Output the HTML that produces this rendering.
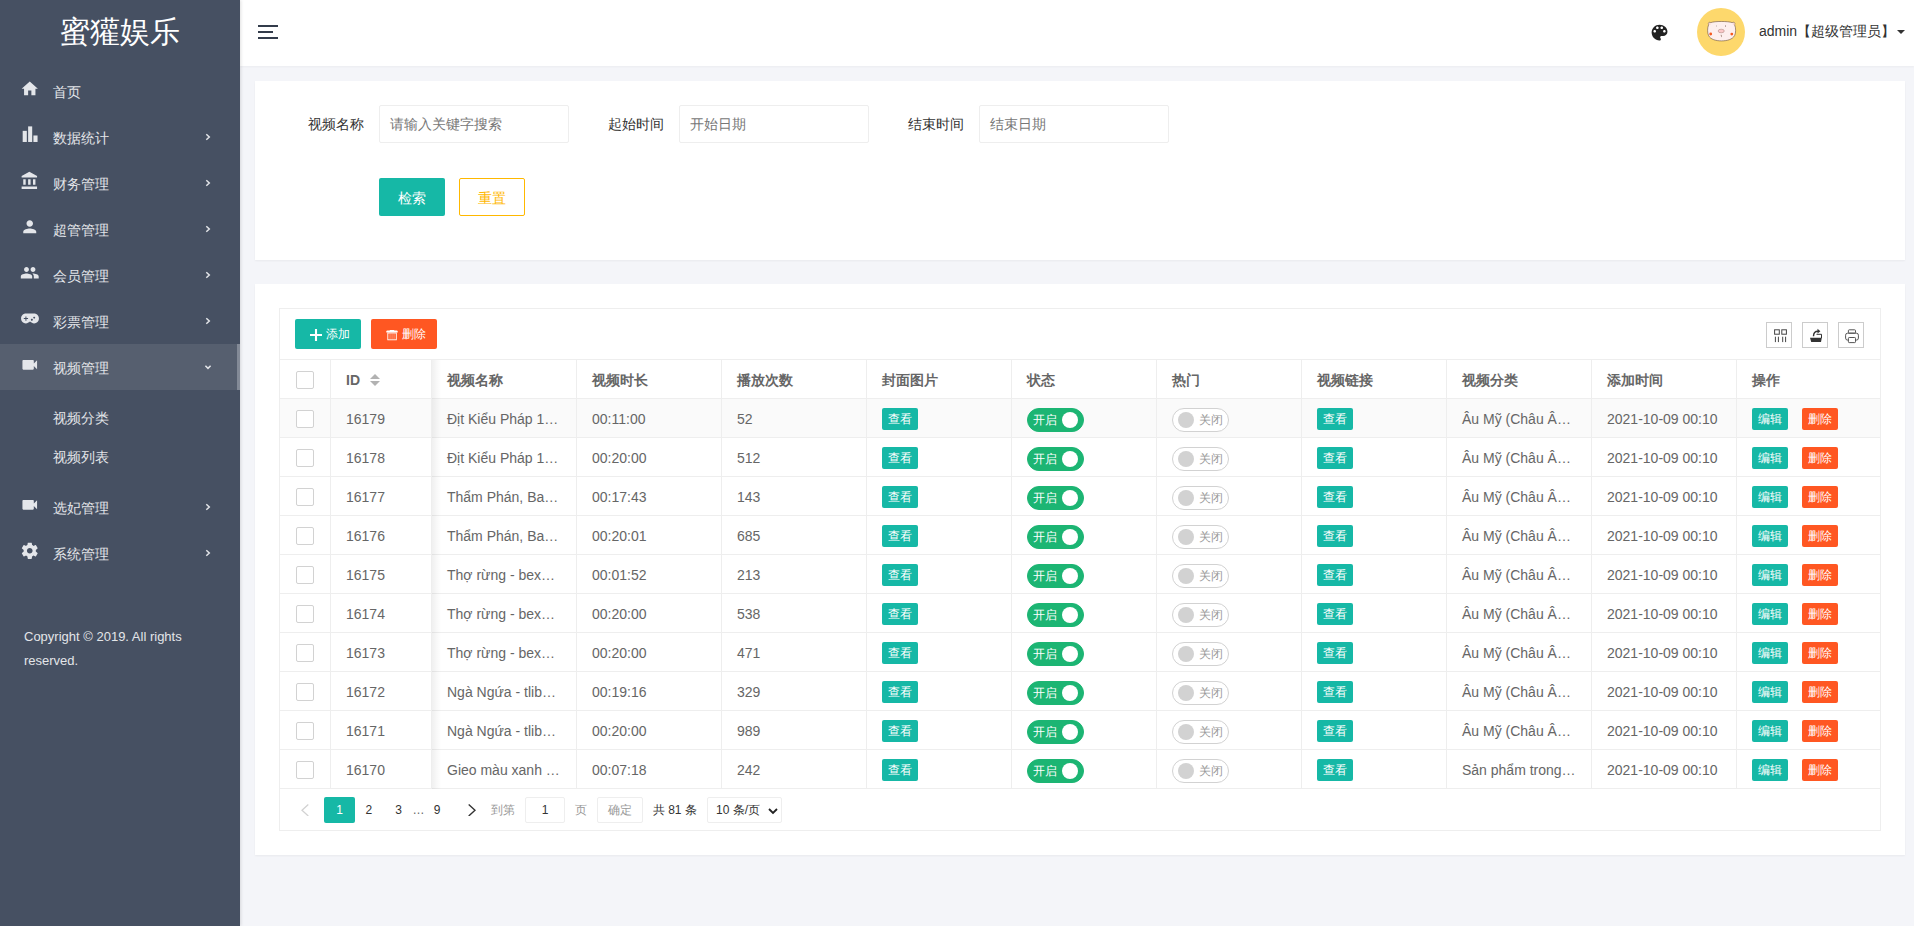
<!DOCTYPE html>
<html lang="zh">
<head>
<meta charset="utf-8">
<title>视频列表</title>
<style>
*{box-sizing:border-box;margin:0;padding:0}
html,body{width:1914px;height:926px;overflow:hidden}
body{font-family:"Liberation Sans",sans-serif;font-size:14px;color:#666;background:#f4f5f9;position:relative}
ul{list-style:none}
/* sidebar */
#side{position:absolute;left:0;top:0;width:240px;height:926px;background:#465062;color:#e3e5e9;z-index:5;box-shadow:1px 0 3px rgba(0,0,0,.12)}
#logo{position:absolute;left:0;top:0;width:240px;height:65px;line-height:64px;text-align:center;font-size:30px;color:#fff}
#nav{position:absolute;left:0;top:68px;width:240px}
#nav li.it{position:relative;height:46px;line-height:48px;padding-left:53px;font-size:14px;color:#e3e5e9}
#nav li.it svg.ic{position:absolute;left:20.200px;top:10.600px;width:19.500px;height:19.500px;fill:#e4e6ea}
#nav li.it svg.ar{position:absolute;left:204px;top:18.500px;width:8px;height:8px;fill:none;stroke:#e3e5e9;stroke-width:1.500}
#nav li.act{background:#565f6f}
#nav li.act:after{content:"";position:absolute;right:0;top:0;width:3px;height:46px;background:#838a97}
#nav ul.sub{padding:8px 0}
#nav ul.sub li{height:39px;line-height:40px;padding-left:53px;color:#e3e5e9}
#copy{position:absolute;left:24px;top:625px;width:192px;font-size:13px;line-height:24px;color:#e3e5e9}
/* header */
#head{position:absolute;left:240px;top:0;width:1674px;height:66px;background:#fff;box-shadow:0 1px 2px rgba(0,0,0,.04)}
#burger{position:absolute;left:18px;top:25px;width:20px;height:14px}
#burger i{position:absolute;left:0;height:2px;background:#333c4b;width:20px}
#pal{position:absolute;left:1409px;top:21.500px;width:21.100px;height:21.100px;fill:#222}
#ava{position:absolute;left:1457px;top:8px;width:48px;height:48px}
#uname{position:absolute;left:1519px;top:0;height:62px;line-height:62px;font-size:14px;color:#333;white-space:nowrap}
#caret{position:absolute;left:1657px;top:30px;width:0;height:0;border-left:4px solid transparent;border-right:4px solid transparent;border-top:4px solid #333}
/* cards */
.card{position:absolute;left:255px;width:1650px;background:#fff;box-shadow:0 1px 2px rgba(0,0,0,.05)}
#c1{top:81px;height:179px}
#c2{top:284px;height:571px}
.lbl{position:absolute;top:24px;height:38px;line-height:38px;width:110px;padding-right:15px;text-align:right;color:#333;font-size:14px}
.inp{position:absolute;top:24px;width:190px;height:38px;border:1px solid #eee;border-radius:2px;background:#fff;line-height:36px;padding-left:10px;color:#777;font-size:14px}
.btn{position:absolute;height:38px;line-height:40px;text-align:center;border-radius:2px;font-size:14px;color:#fff}

#tb{position:absolute;left:279px;top:308px;width:1602px;height:523px;border:1px solid #eee;background:#fff;overflow:hidden}
#tb .tool{position:absolute;left:0;top:0;width:1600px;height:51px;border-bottom:1px solid #eee}
.sbtn{position:absolute;top:10px;height:30px;width:66px;border-radius:2px;color:#fff;font-size:12px;line-height:31px;white-space:nowrap}
.tico{position:absolute;top:13px;width:26px;height:26px;border:1px solid #ccc;background:#fff}
.tico svg{position:absolute;left:0;top:0;width:24px;height:24px}
.row{position:absolute;left:0;width:1600px;height:39px;border-bottom:1px solid #eee}
.row.hd{font-weight:bold;color:#666}
.row.hv{background:#fafafa}
.c{position:absolute;top:0;height:38px;border-right:1px solid #eee;padding-left:15px;line-height:40px;font-size:14px;white-space:nowrap;overflow:hidden}
.c.last{border-right:none}
.cb{position:absolute;left:16px;top:11px;width:18px;height:18px;border:1px solid #d2d2d2;border-radius:2px;background:#fff}
.xs{position:absolute;top:9px;height:22px;width:36px;border-radius:2px;color:#fff;font-size:12px;line-height:23px;text-align:center;background:#16b8a6}
.xs.del{background:#ff5722}
.sw{position:absolute;left:15px;top:9px;width:57px;height:24px;border-radius:12px;font-size:12px;line-height:22px;border:1px solid #d2d2d2;background:#fff;color:#999}
.sw i{position:absolute;top:3px;width:16px;height:16px;border-radius:50%;background:#d2d2d2;left:5px}
.sw em{position:absolute;font-style:normal;left:26px;top:0}
.sw.on{background:#1cb573;border-color:#1cb573;color:#fff}
.sw.on i{background:#fff;left:34px}
.sw.on em{left:5px}
.sort{position:absolute;left:39px;top:14px;width:10px;height:12px}
.sort:before{content:"";position:absolute;left:0;top:-5px;border:5px solid transparent;border-bottom-color:#b2b2b2}
.sort:after{content:"";position:absolute;left:0;top:7px;border:5px solid transparent;border-top-color:#b2b2b2}
#shadow{position:absolute;left:152px;top:51px;width:9px;height:429px;background:linear-gradient(to right,rgba(0,0,0,.06),rgba(0,0,0,0))}
#pg{position:absolute;left:0;top:480px;width:1600px;height:41px;font-size:12px;color:#333}
#pg span,#pg div{position:absolute;top:8px;height:26px;line-height:26px;white-space:nowrap}

</style>
</head>
<body>
<div id="side">
  <div id="logo">蜜獾娱乐</div>
  <ul id="nav">
<li class="it"><svg class="ic" viewBox="0 0 24 24"><path d="M10 20v-6h4v6h5v-8h3L12 3 2 12h3v8z"/></svg><span>首页</span></li>
<li class="it"><svg class="ic" viewBox="0 0 24 24"><rect x="3.300" y="7.200" width="5.100" height="13.700"/><rect x="10" y="1.700" width="5" height="19.200"/><rect x="16.500" y="12.900" width="5.100" height="8"/></svg><span>数据统计</span><svg class="ar" viewBox="0 0 8 8"><path d="M2.300 1.200L5.300 4 2.300 6.800"/></svg></li>
<li class="it"><svg class="ic" viewBox="0 0 24 24"><path d="M4 10v7h3v-7H4zm6 0v7h3v-7h-3zM2 22h19v-3H2v3zm14-12v7h3v-7h-3zm-4.500-9L2 6v2h19V6l-9.500-5z"/></svg><span>财务管理</span><svg class="ar" viewBox="0 0 8 8"><path d="M2.300 1.200L5.300 4 2.300 6.800"/></svg></li>
<li class="it"><svg class="ic" viewBox="0 0 24 24"><path d="M12 12c2.210 0 4-1.790 4-4s-1.790-4-4-4-4 1.790-4 4 1.790 4 4 4zm0 2c-2.670 0-8 1.340-8 4v2h16v-2c0-2.660-5.330-4-8-4z"/></svg><span>超管管理</span><svg class="ar" viewBox="0 0 8 8"><path d="M2.300 1.200L5.300 4 2.300 6.800"/></svg></li>
<li class="it"><svg class="ic" viewBox="0 0 24 24"><path d="M16 11c1.660 0 2.990-1.340 2.990-3S17.660 5 16 5c-1.660 0-3 1.340-3 3s1.340 3 3 3zm-8 0c1.660 0 2.990-1.340 2.990-3S9.660 5 8 5C6.340 5 5 6.340 5 8s1.340 3 3 3zm0 2c-2.330 0-7 1.170-7 3.500V19h14v-2.500c0-2.330-4.670-3.500-7-3.500zm8 0c-.290 0-.620.020-.970.050 1.160.840 1.970 1.970 1.970 3.450V19h6v-2.500c0-2.330-4.670-3.500-7-3.500z"/></svg><span>会员管理</span><svg class="ar" viewBox="0 0 8 8"><path d="M2.300 1.200L5.300 4 2.300 6.800"/></svg></li>
<li class="it"><svg class="ic" viewBox="0 0 24 24"><g transform="translate(12.300 11.600) scale(.955) translate(-12.300 -11.600)"><path d="M7 5.200h10.600c3.500 0 6.200 2.900 6.200 6.400s-2.700 6.400-6.200 6.400c-2 0-3.700-.900-4.800-2.300l-.500 1.300-.500-1.300C10.700 17.100 9 18 7 18 3.500 18 .800 15.100.800 11.600S3.500 5.200 7 5.200z"/><path d="M4.300 11.100h2.100V9h1.300v2.100h2.100v1.300H7.700v2.100H6.400v-2.100H4.300zM14.700 12.100a1.200 1.200 0 1 0 .010 0zM17.700 9.300a1.200 1.200 0 1 0 .010 0z" fill="#465062"/></g></svg><span>彩票管理</span><svg class="ar" viewBox="0 0 8 8"><path d="M2.300 1.200L5.300 4 2.300 6.800"/></svg></li>
<li class="it act"><svg class="ic" viewBox="0 0 24 24"><path d="M17 10.500V7c0-.550-.450-1-1-1H4c-.550 0-1 .450-1 1v10c0 .550.450 1 1 1h12c.550 0 1-.450 1-1v-3.500l4 4v-11l-4 4z"/></svg><span>视频管理</span><svg class="ar" viewBox="0 0 8 8"><path d="M1.400 2.800L4 5.400 6.600 2.800"/></svg></li>
<li><ul class="sub"><li>视频分类</li><li>视频列表</li></ul></li>
<li class="it"><svg class="ic" viewBox="0 0 24 24"><path d="M17 10.500V7c0-.550-.450-1-1-1H4c-.550 0-1 .450-1 1v10c0 .550.450 1 1 1h12c.550 0 1-.450 1-1v-3.500l4 4v-11l-4 4z"/></svg><span>选妃管理</span><svg class="ar" viewBox="0 0 8 8"><path d="M2.300 1.200L5.300 4 2.300 6.800"/></svg></li>
<li class="it"><svg class="ic" viewBox="0 0 24 24"><path d="M19.430 12.980c.040-.320.070-.640.070-.980s-.030-.660-.070-.980l2.110-1.650c.190-.150.240-.420.120-.640l-2-3.460c-.120-.220-.390-.300-.610-.220l-2.490 1c-.520-.400-1.080-.730-1.690-.980l-.380-2.650C14.460 2.180 14.250 2 14 2h-4c-.250 0-.460.180-.490.420l-.380 2.650c-.610.250-1.170.590-1.690.980l-2.490-1c-.230-.090-.490 0-.610.220l-2 3.460c-.130.220-.070.490.120.640l2.110 1.650c-.040.320-.070.650-.070.980s.030.660.070.980l-2.110 1.650c-.190.150-.240.420-.120.640l2 3.460c.120.220.390.300.610.220l2.490-1c.520.400 1.080.730 1.690.980l.380 2.650c.030.240.240.420.490.420h4c.250 0 .460-.180.490-.420l.380-2.650c.610-.250 1.170-.590 1.690-.980l2.490 1c.230.090.490 0 .610-.220l2-3.460c.120-.220.070-.490-.120-.640l-2.110-1.650zM12 15.500c-1.930 0-3.500-1.570-3.500-3.500s1.570-3.500 3.500-3.500 3.500 1.570 3.500 3.500-1.570 3.500-3.500 3.500z"/></svg><span>系统管理</span><svg class="ar" viewBox="0 0 8 8"><path d="M2.300 1.200L5.300 4 2.300 6.800"/></svg></li>
  </ul>
  <div id="copy">Copyright © 2019. All rights reserved.</div>
</div>
<div id="head">
  <div id="burger"><i style="top:0"></i><i style="top:6px;width:15px"></i><i style="top:12px"></i></div>
  <svg id="pal" viewBox="0 0 24 24"><path d="M12 3c-4.970 0-9 4.030-9 9s4.030 9 9 9c.830 0 1.500-.670 1.500-1.500 0-.390-.150-.740-.390-1.010-.230-.260-.380-.610-.380-.990 0-.830.670-1.500 1.500-1.500H16c2.760 0 5-2.240 5-5 0-4.420-4.030-8-9-8zm-5.500 9c-.830 0-1.500-.670-1.500-1.500S5.670 9 6.500 9 8 9.670 8 10.500 7.330 12 6.500 12zm3-4C8.670 8 8 7.330 8 6.500S8.670 5 9.500 5s1.500.670 1.500 1.500S10.330 8 9.500 8zm5 0c-.830 0-1.500-.670-1.500-1.500S13.670 5 14.500 5s1.500.670 1.500 1.500S15.330 8 14.500 8zm3 4c-.830 0-1.500-.670-1.500-1.500S16.670 9 17.500 9s1.500.670 1.500 1.500-.670 1.500-1.500 1.500z"/></svg>
  <svg id="ava" viewBox="0 0 48 48"><circle cx="24" cy="24" r="24" fill="#fdd86c"/>
    <path d="M13.500 14.600C17 13.100 31.500 13.100 35.500 14.600C37.500 13.600 39 15 38.100 16.900C39.600 20 39.400 25 38.100 27.500C36 31.500 30 32.900 24.500 32.900C19 32.900 13 31.500 11.100 27.500C9.800 25 9.700 20 11.100 16.900C10.200 15 11.700 13.600 13.500 14.600Z" fill="#fdefee" stroke="#5a4034" stroke-width=".55" transform="translate(24.600 0) scale(.965 1) translate(-24.600 0)"/>
    <circle cx="12.600" cy="15.900" r="1" fill="#fbd3cf"/><circle cx="36.600" cy="15.900" r="1" fill="#fbd3cf"/>
    <ellipse cx="24.200" cy="23" rx="3.100" ry="1.800" fill="#fbc8c8" stroke="#7a5a4a" stroke-width=".35"/><circle cx="13.700" cy="26" r="1.400" fill="#f5591f"/><circle cx="34.800" cy="26.100" r="1.400" fill="#f5591f"/>
    <rect x="19.200" y="17.300" width=".45" height="1.400" fill="#9a8a84"/><rect x="28.300" y="17.300" width=".5" height="1.500" fill="#5a4034"/><path d="M23.600 27.200h.9v1.900" fill="none" stroke="#7a5a4a" stroke-width=".5"/></svg>
  <div id="uname">admin【超级管理员】</div>
  <div id="caret"></div>

</div>
<div class="card" id="c1">
  <div class="lbl" style="left:14px">视频名称</div><div class="inp" style="left:124px">请输入关键字搜索</div>
  <div class="lbl" style="left:314px">起始时间</div><div class="inp" style="left:424px">开始日期</div>
  <div class="lbl" style="left:614px">结束时间</div><div class="inp" style="left:724px">结束日期</div>
  <div class="btn" style="left:124px;top:97px;width:66px;background:#16b8a6">检索</div>
  <div class="btn" style="left:204px;top:97px;width:66px;background:#fff;border:1px solid #ffb800;color:#ffb800;line-height:38px">重置</div>

</div>
<div class="card" id="c2"></div>
<div id="tb">
<div class="tool">
<div class="sbtn" style="left:15px;background:#16b8a6"><svg style="position:absolute;left:15.100px;top:10px;width:12px;height:12px" viewBox="0 0 12 12"><path d="M6 0v12M0 6h12" stroke="#fff" stroke-width="2.100" fill="none"/></svg><span style="position:absolute;left:31px">添加</span></div>
<div class="sbtn" style="left:91px;background:#ff5722"><svg style="position:absolute;left:15px;top:11px;width:12px;height:10.500px" viewBox="0 0 12 10.500"><path d="M0.300 .9Q.3 .6 1.200 .6H3.800V0H8.200V.6H10.800Q11.700 .6 11.700 .9V2.600H.3z" fill="#fff"/><rect x="1.800" y="3" width="8.500" height="6.800" fill="none" stroke="#fff" stroke-width=".9"/><path d="M4.050 3.500v5.800M6.050 3.500v5.800M8.050 3.500v5.800" stroke="#fff" stroke-width=".7" opacity=".55"/></svg><span style="position:absolute;left:31px">删除</span></div>
<div class="tico" style="left:1486px"><svg viewBox="0 0 24 24" fill="none" stroke="#444" stroke-width="1"><rect x="7.600" y="6.800" width="4.700" height="4.400"/><rect x="14.800" y="6.800" width="4.600" height="4.400"/><path d="M8.400 13.700v5.400M11.400 13.700v5.400M15.700 13.700v5.400M18.600 13.700v5.400"/></svg></div><div class="tico" style="left:1522px"><svg viewBox="0 0 24 24"><path d="M7 14.800H18.800L18 19.100H8.200Z" fill="#333"/><path d="M13.500 11.300H18.500V15" fill="none" stroke="#333" stroke-width="1"/><path d="M10.500 13.200C10.500 9.800 12 8.200 15 8.200" fill="none" stroke="#333" stroke-width="1.400"/><path d="M14.500 5.800L17.400 8.200 14.500 10.600Z" fill="#333"/></svg></div><div class="tico" style="left:1558px"><svg viewBox="0 0 24 24" fill="none" stroke="#555" stroke-width="1"><rect x="6.600" y="10.200" width="12.800" height="6.900" rx="2"/><rect x="9.400" y="6.800" width="7.100" height="3.400" rx=".8"/><rect x="9.400" y="14.500" width="7.100" height="5.100" rx=".8" fill="#fff"/></svg></div>
</div>
<div class="row hd" style="top:51px">
<div class="c" style="left:0px;width:51px;padding:0"><div class="cb"></div></div>
<div class="c" style="left:51px;width:101px">ID<div class="sort"></div></div>
<div class="c" style="left:152px;width:145px">视频名称</div>
<div class="c" style="left:297px;width:145px">视频时长</div>
<div class="c" style="left:442px;width:145px">播放次数</div>
<div class="c" style="left:587px;width:145px">封面图片</div>
<div class="c" style="left:732px;width:145px">状态</div>
<div class="c" style="left:877px;width:145px">热门</div>
<div class="c" style="left:1022px;width:145px">视频链接</div>
<div class="c" style="left:1167px;width:145px">视频分类</div>
<div class="c" style="left:1312px;width:145px">添加时间</div>
<div class="c last" style="left:1457px;width:143px">操作</div>
</div>
<div class="row hv" style="top:90px">
<div class="c" style="left:0px;width:51px;padding:0"><div class="cb"></div></div>
<div class="c" style="left:51px;width:101px">16179</div>
<div class="c" style="left:152px;width:145px">Địt Kiểu Pháp 1…</div>
<div class="c" style="left:297px;width:145px">00:11:00</div>
<div class="c" style="left:442px;width:145px">52</div>
<div class="c" style="left:587px;width:145px"><div class="xs" style="left:15px">查看</div></div>
<div class="c" style="left:732px;width:145px"><div class="sw on"><em>开启</em><i></i></div></div>
<div class="c" style="left:877px;width:145px"><div class="sw"><i></i><em>关闭</em></div></div>
<div class="c" style="left:1022px;width:145px"><div class="xs" style="left:15px">查看</div></div>
<div class="c" style="left:1167px;width:145px">Âu Mỹ (Châu Â…</div>
<div class="c" style="left:1312px;width:145px">2021-10-09 00:10</div>
<div class="c last" style="left:1457px;width:143px"><div class="xs" style="left:15px">编辑</div><div class="xs del" style="left:65px">删除</div></div>
</div>
<div class="row" style="top:129px">
<div class="c" style="left:0px;width:51px;padding:0"><div class="cb"></div></div>
<div class="c" style="left:51px;width:101px">16178</div>
<div class="c" style="left:152px;width:145px">Địt Kiểu Pháp 1…</div>
<div class="c" style="left:297px;width:145px">00:20:00</div>
<div class="c" style="left:442px;width:145px">512</div>
<div class="c" style="left:587px;width:145px"><div class="xs" style="left:15px">查看</div></div>
<div class="c" style="left:732px;width:145px"><div class="sw on"><em>开启</em><i></i></div></div>
<div class="c" style="left:877px;width:145px"><div class="sw"><i></i><em>关闭</em></div></div>
<div class="c" style="left:1022px;width:145px"><div class="xs" style="left:15px">查看</div></div>
<div class="c" style="left:1167px;width:145px">Âu Mỹ (Châu Â…</div>
<div class="c" style="left:1312px;width:145px">2021-10-09 00:10</div>
<div class="c last" style="left:1457px;width:143px"><div class="xs" style="left:15px">编辑</div><div class="xs del" style="left:65px">删除</div></div>
</div>
<div class="row" style="top:168px">
<div class="c" style="left:0px;width:51px;padding:0"><div class="cb"></div></div>
<div class="c" style="left:51px;width:101px">16177</div>
<div class="c" style="left:152px;width:145px">Thẩm Phán, Ba…</div>
<div class="c" style="left:297px;width:145px">00:17:43</div>
<div class="c" style="left:442px;width:145px">143</div>
<div class="c" style="left:587px;width:145px"><div class="xs" style="left:15px">查看</div></div>
<div class="c" style="left:732px;width:145px"><div class="sw on"><em>开启</em><i></i></div></div>
<div class="c" style="left:877px;width:145px"><div class="sw"><i></i><em>关闭</em></div></div>
<div class="c" style="left:1022px;width:145px"><div class="xs" style="left:15px">查看</div></div>
<div class="c" style="left:1167px;width:145px">Âu Mỹ (Châu Â…</div>
<div class="c" style="left:1312px;width:145px">2021-10-09 00:10</div>
<div class="c last" style="left:1457px;width:143px"><div class="xs" style="left:15px">编辑</div><div class="xs del" style="left:65px">删除</div></div>
</div>
<div class="row" style="top:207px">
<div class="c" style="left:0px;width:51px;padding:0"><div class="cb"></div></div>
<div class="c" style="left:51px;width:101px">16176</div>
<div class="c" style="left:152px;width:145px">Thẩm Phán, Ba…</div>
<div class="c" style="left:297px;width:145px">00:20:01</div>
<div class="c" style="left:442px;width:145px">685</div>
<div class="c" style="left:587px;width:145px"><div class="xs" style="left:15px">查看</div></div>
<div class="c" style="left:732px;width:145px"><div class="sw on"><em>开启</em><i></i></div></div>
<div class="c" style="left:877px;width:145px"><div class="sw"><i></i><em>关闭</em></div></div>
<div class="c" style="left:1022px;width:145px"><div class="xs" style="left:15px">查看</div></div>
<div class="c" style="left:1167px;width:145px">Âu Mỹ (Châu Â…</div>
<div class="c" style="left:1312px;width:145px">2021-10-09 00:10</div>
<div class="c last" style="left:1457px;width:143px"><div class="xs" style="left:15px">编辑</div><div class="xs del" style="left:65px">删除</div></div>
</div>
<div class="row" style="top:246px">
<div class="c" style="left:0px;width:51px;padding:0"><div class="cb"></div></div>
<div class="c" style="left:51px;width:101px">16175</div>
<div class="c" style="left:152px;width:145px">Thợ rừng - bex…</div>
<div class="c" style="left:297px;width:145px">00:01:52</div>
<div class="c" style="left:442px;width:145px">213</div>
<div class="c" style="left:587px;width:145px"><div class="xs" style="left:15px">查看</div></div>
<div class="c" style="left:732px;width:145px"><div class="sw on"><em>开启</em><i></i></div></div>
<div class="c" style="left:877px;width:145px"><div class="sw"><i></i><em>关闭</em></div></div>
<div class="c" style="left:1022px;width:145px"><div class="xs" style="left:15px">查看</div></div>
<div class="c" style="left:1167px;width:145px">Âu Mỹ (Châu Â…</div>
<div class="c" style="left:1312px;width:145px">2021-10-09 00:10</div>
<div class="c last" style="left:1457px;width:143px"><div class="xs" style="left:15px">编辑</div><div class="xs del" style="left:65px">删除</div></div>
</div>
<div class="row" style="top:285px">
<div class="c" style="left:0px;width:51px;padding:0"><div class="cb"></div></div>
<div class="c" style="left:51px;width:101px">16174</div>
<div class="c" style="left:152px;width:145px">Thợ rừng - bex…</div>
<div class="c" style="left:297px;width:145px">00:20:00</div>
<div class="c" style="left:442px;width:145px">538</div>
<div class="c" style="left:587px;width:145px"><div class="xs" style="left:15px">查看</div></div>
<div class="c" style="left:732px;width:145px"><div class="sw on"><em>开启</em><i></i></div></div>
<div class="c" style="left:877px;width:145px"><div class="sw"><i></i><em>关闭</em></div></div>
<div class="c" style="left:1022px;width:145px"><div class="xs" style="left:15px">查看</div></div>
<div class="c" style="left:1167px;width:145px">Âu Mỹ (Châu Â…</div>
<div class="c" style="left:1312px;width:145px">2021-10-09 00:10</div>
<div class="c last" style="left:1457px;width:143px"><div class="xs" style="left:15px">编辑</div><div class="xs del" style="left:65px">删除</div></div>
</div>
<div class="row" style="top:324px">
<div class="c" style="left:0px;width:51px;padding:0"><div class="cb"></div></div>
<div class="c" style="left:51px;width:101px">16173</div>
<div class="c" style="left:152px;width:145px">Thợ rừng - bex…</div>
<div class="c" style="left:297px;width:145px">00:20:00</div>
<div class="c" style="left:442px;width:145px">471</div>
<div class="c" style="left:587px;width:145px"><div class="xs" style="left:15px">查看</div></div>
<div class="c" style="left:732px;width:145px"><div class="sw on"><em>开启</em><i></i></div></div>
<div class="c" style="left:877px;width:145px"><div class="sw"><i></i><em>关闭</em></div></div>
<div class="c" style="left:1022px;width:145px"><div class="xs" style="left:15px">查看</div></div>
<div class="c" style="left:1167px;width:145px">Âu Mỹ (Châu Â…</div>
<div class="c" style="left:1312px;width:145px">2021-10-09 00:10</div>
<div class="c last" style="left:1457px;width:143px"><div class="xs" style="left:15px">编辑</div><div class="xs del" style="left:65px">删除</div></div>
</div>
<div class="row" style="top:363px">
<div class="c" style="left:0px;width:51px;padding:0"><div class="cb"></div></div>
<div class="c" style="left:51px;width:101px">16172</div>
<div class="c" style="left:152px;width:145px">Ngà Ngứa - tlib…</div>
<div class="c" style="left:297px;width:145px">00:19:16</div>
<div class="c" style="left:442px;width:145px">329</div>
<div class="c" style="left:587px;width:145px"><div class="xs" style="left:15px">查看</div></div>
<div class="c" style="left:732px;width:145px"><div class="sw on"><em>开启</em><i></i></div></div>
<div class="c" style="left:877px;width:145px"><div class="sw"><i></i><em>关闭</em></div></div>
<div class="c" style="left:1022px;width:145px"><div class="xs" style="left:15px">查看</div></div>
<div class="c" style="left:1167px;width:145px">Âu Mỹ (Châu Â…</div>
<div class="c" style="left:1312px;width:145px">2021-10-09 00:10</div>
<div class="c last" style="left:1457px;width:143px"><div class="xs" style="left:15px">编辑</div><div class="xs del" style="left:65px">删除</div></div>
</div>
<div class="row" style="top:402px">
<div class="c" style="left:0px;width:51px;padding:0"><div class="cb"></div></div>
<div class="c" style="left:51px;width:101px">16171</div>
<div class="c" style="left:152px;width:145px">Ngà Ngứa - tlib…</div>
<div class="c" style="left:297px;width:145px">00:20:00</div>
<div class="c" style="left:442px;width:145px">989</div>
<div class="c" style="left:587px;width:145px"><div class="xs" style="left:15px">查看</div></div>
<div class="c" style="left:732px;width:145px"><div class="sw on"><em>开启</em><i></i></div></div>
<div class="c" style="left:877px;width:145px"><div class="sw"><i></i><em>关闭</em></div></div>
<div class="c" style="left:1022px;width:145px"><div class="xs" style="left:15px">查看</div></div>
<div class="c" style="left:1167px;width:145px">Âu Mỹ (Châu Â…</div>
<div class="c" style="left:1312px;width:145px">2021-10-09 00:10</div>
<div class="c last" style="left:1457px;width:143px"><div class="xs" style="left:15px">编辑</div><div class="xs del" style="left:65px">删除</div></div>
</div>
<div class="row" style="top:441px">
<div class="c" style="left:0px;width:51px;padding:0"><div class="cb"></div></div>
<div class="c" style="left:51px;width:101px">16170</div>
<div class="c" style="left:152px;width:145px">Gieo màu xanh …</div>
<div class="c" style="left:297px;width:145px">00:07:18</div>
<div class="c" style="left:442px;width:145px">242</div>
<div class="c" style="left:587px;width:145px"><div class="xs" style="left:15px">查看</div></div>
<div class="c" style="left:732px;width:145px"><div class="sw on"><em>开启</em><i></i></div></div>
<div class="c" style="left:877px;width:145px"><div class="sw"><i></i><em>关闭</em></div></div>
<div class="c" style="left:1022px;width:145px"><div class="xs" style="left:15px">查看</div></div>
<div class="c" style="left:1167px;width:145px">Sản phẩm trong…</div>
<div class="c" style="left:1312px;width:145px">2021-10-09 00:10</div>
<div class="c last" style="left:1457px;width:143px"><div class="xs" style="left:15px">编辑</div><div class="xs del" style="left:65px">删除</div></div>
</div>
<div id="shadow"></div>
<div id="pg"><svg style="position:absolute;left:21px;top:14.500px;width:8px;height:12.500px" viewBox="0 0 8 12.500"><path d="M7.300 .5L1 6.250 7.300 12" fill="none" stroke="#d2d2d2" stroke-width="1.300"/></svg><div style="left:44px;width:31px;background:#16b8a6;border-radius:2px;color:#fff;text-align:center">1</div><span style="left:85.500px">2</span><span style="left:115.300px">3</span><span style="left:132.500px;color:#666">…</span><span style="left:153.700px">9</span><svg style="position:absolute;left:188px;top:14.500px;width:8px;height:12.500px" viewBox="0 0 8 12.500"><path d="M.7 .5L7 6.250 .7 12" fill="none" stroke="#333" stroke-width="1.400"/></svg><span style="left:211px;color:#999">到第</span><div style="left:245px;width:40px;border:1px solid #eee;border-radius:2px;text-align:center;line-height:24px">1</div><span style="left:295px;color:#999">页</span><div style="left:317px;width:46px;border:1px solid #eee;border-radius:2px;text-align:center;line-height:24px;color:#999">确定</div><span style="left:372.800px">共 81 条</span><div style="left:427px;width:75px;border:1px solid #eee;border-radius:2px;line-height:24px;padding-left:8px">10 条/页<svg style="position:absolute;left:59.500px;top:9.500px;width:10px;height:7px" viewBox="0 0 10 7"><path d="M1 1L5 5 9 1" fill="none" stroke="#222" stroke-width="1.800"/></svg></div></div>
</div>
</body>
</html>
